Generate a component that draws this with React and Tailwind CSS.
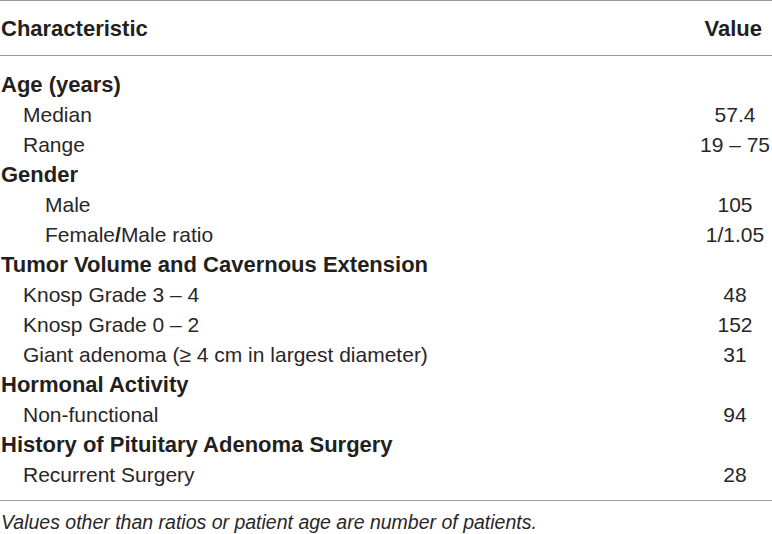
import React from "react";

const rows = [
  { label: "Age (years)", bold: true },
  { label: "Median", indent: 1, value: "57.4" },
  { label: "Range", indent: 1, value: "19 – 75" },
  { label: "Gender", bold: true },
  { label: "Male", indent: 2, value: "105" },
  { label: "Female/Male ratio", indent: 2, value: "1/1.05", slash: true },
  { label: "Tumor Volume and Cavernous Extension", bold: true },
  { label: "Knosp Grade 3 – 4", indent: 1, value: "48" },
  { label: "Knosp Grade 0 – 2", indent: 1, value: "152" },
  { label: "Giant adenoma (≥ 4 cm in largest diameter)", indent: 1, value: "31" },
  { label: "Hormonal Activity", bold: true },
  { label: "Non-functional", indent: 1, value: "94" },
  { label: "History of Pituitary Adenoma Surgery", bold: true },
  { label: "Recurrent Surgery", indent: 1, value: "28" },
];

function Label({ row }) {
  if (row.slash) {
    return (
      <span>
        Female<b className="font-bold">/</b>Male ratio
      </span>
    );
  }
  return <span>{row.label}</span>;
}

export default function App() {
  return (
    <div
      className="w-[772px] h-[534px] bg-white text-[#231f20] overflow-hidden"
      style={{ fontFamily: '"Liberation Sans", Arial, sans-serif' }}
    >
      {/* Header */}
      <div className="border-t border-[#9a9a9a] border-b h-[56px] flex items-center justify-between text-[22px] font-bold">
        <span className="pl-[1px]">Characteristic</span>
        <span className="pr-[10px]">Value</span>
      </div>

      {/* Body */}
      <div className="pt-[14px] pb-[10px] border-b border-[#9a9a9a]">
        {rows.map((row, i) => (
          <div key={i} className="flex h-[30px] items-center leading-[30px]">
            <div
              className={`flex-1 ${row.bold ? "font-bold text-[22px]" : "font-normal text-[21px] text-[#2a2627]"} ${
                row.indent === 1 ? "pl-[23px]" : row.indent === 2 ? "pl-[45px]" : "pl-[1px]"
              }`}
            >
              <Label row={row} />
            </div>
            <div className="w-[74px] text-center text-[21px] text-[#2a2627]">{row.value}</div>
          </div>
        ))}
      </div>

      {/* Footnote */}
      <p className="italic text-[19.5px] leading-[42px] pl-[1px] text-[#2a2627]">
        Values other than ratios or patient age are number of patients.
      </p>
    </div>
  );
}
